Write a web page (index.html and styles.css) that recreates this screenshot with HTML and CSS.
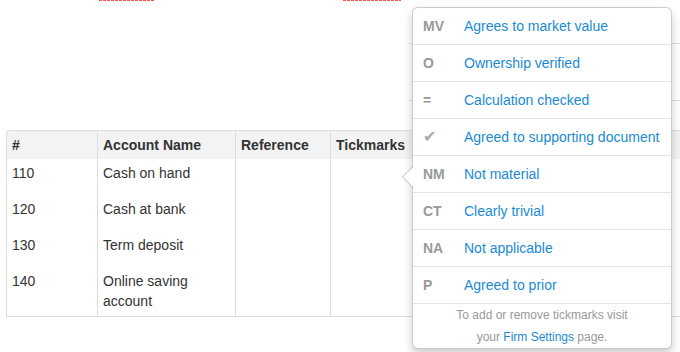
FILE: index.html
```html
<!DOCTYPE html>
<html lang="en">
<head>
    <meta charset="UTF-8">
    <meta name="viewport" content="width=device-width, initial-scale=1.0">
    <title>Tickmarks</title>
    <link rel="stylesheet" href="styles.css">
</head>
<body>
    <div class="marks">
        <span class="mark mark-a"></span>
        <span class="mark mark-b"></span>
    </div>
    <div class="side-lines"></div>

    <div class="grid-wrap">
        <table class="accounts">
            <thead>
                <tr>
                    <th class="col-num">#</th>
                    <th class="col-name">Account Name</th>
                    <th class="col-ref">Reference</th>
                    <th>Tickmarks</th>
                </tr>
            </thead>
            <tbody>
                <tr><td>110</td><td>Cash on hand</td><td></td><td></td></tr>
                <tr><td>120</td><td>Cash at bank</td><td></td><td></td></tr>
                <tr><td>130</td><td>Term deposit</td><td></td><td></td></tr>
                <tr><td>140</td><td>Online saving<br>account</td><td></td><td></td></tr>
            </tbody>
        </table>
    </div>

    <div class="popover">
        <div class="arrow"></div>
        <ul class="tickmarks">
            <li><span class="code">MV</span><a href="#">Agrees to market value</a></li>
            <li><span class="code">O</span><a href="#">Ownership verified</a></li>
            <li><span class="code">=</span><a href="#">Calculation checked</a></li>
            <li><span class="code tick">&#10004;</span><a href="#">Agreed to supporting document</a></li>
            <li><span class="code">NM</span><a href="#">Not material</a></li>
            <li><span class="code">CT</span><a href="#">Clearly trivial</a></li>
            <li><span class="code">NA</span><a href="#">Not applicable</a></li>
            <li><span class="code">P</span><a href="#">Agreed to prior</a></li>
        </ul>
        <p class="popover-foot">To add or remove tickmarks visit<br>your <a href="#">Firm Settings</a> page.</p>
    </div>
</body>
</html>
```

FILE: styles.css
```css
body {
    margin: 0;
    font-family: "Liberation Sans", Arial, sans-serif;
    font-size: 14px;
    line-height: 20px;
    color: #333;
    background-color: #fff;
}

.marks {
    display: flex;
    height: 1px;
}

.mark {
    display: block;
    height: 1px;
    background: repeating-linear-gradient(to right, #ff4d4d 0 3px, transparent 3px 4px);
}

.mark-a {
    margin-left: 99px;
    width: 55px;
}

.mark-b {
    margin-left: 189px;
    width: 58px;
}

.side-lines {
    margin: 42px 0 0 409px;
    height: 56px;
    border-top: 1px solid #ddd;
    border-bottom: 1px solid #ddd;
}

.grid-wrap {
    margin: 29px 0 0 6px;
    border-top: 1px solid #ddd;
    border-left: 1px solid #ddd;
    border-bottom: 1px solid #ddd;
    border-top-left-radius: 3px;
    overflow: hidden;
}

.accounts {
    width: 100%;
    table-layout: fixed;
    border-collapse: separate;
    border-spacing: 0;
}

.accounts th,
.accounts td {
    box-sizing: border-box;
    text-align: left;
    vertical-align: top;
    border-left: 1px solid #ddd;
}

.accounts th:first-child,
.accounts td:first-child {
    border-left: none;
}

.accounts th {
    padding: 4px 5px;
    font-weight: bold;
    background-color: #f3f3f3;
}

.accounts td {
    padding: 4px 5px 5px;
}

.accounts tbody tr {
    height: 36px;
}

.col-num {
    width: 90px;
}

.col-name {
    width: 138px;
}

.col-ref {
    width: 95px;
}

.popover {
    position: absolute;
    left: 412px;
    top: 7px;
    box-sizing: border-box;
    width: 260px;
    background-color: #fff;
    border: 1px solid rgba(0, 0, 0, 0.2);
    border-radius: 6px;
    box-shadow: 0 5px 10px rgba(0, 0, 0, 0.2);
}

.arrow,
.arrow::after {
    position: absolute;
    width: 0;
    height: 0;
    border-style: solid;
    border-color: transparent;
}

.arrow {
    left: -11px;
    top: 158px;
    border-width: 11px 11px 11px 0;
    border-right-color: rgba(0, 0, 0, 0.25);
}

.arrow::after {
    content: "";
    left: 1px;
    top: -10px;
    border-width: 10px 10px 10px 0;
    border-right-color: #fff;
}

.tickmarks {
    list-style: none;
    margin: 0;
    padding: 0;
}

.tickmarks li {
    display: flex;
    align-items: center;
    height: 36px;
    padding: 0 10px;
    border-bottom: 1px solid #e3e3e3;
}

.code {
    width: 41px;
    flex: none;
    font-weight: bold;
    color: #999;
}

.tick {
    font-family: "DejaVu Sans", sans-serif;
    font-weight: normal;
    font-size: 16px;
    color: #aaa;
}

.tickmarks a,
.popover-foot a {
    color: #1a8ad4;
    text-decoration: none;
}

.popover-foot {
    margin: 0;
    font-size: 12px;
    line-height: 22px;
    text-align: center;
    color: #999;
}
```
